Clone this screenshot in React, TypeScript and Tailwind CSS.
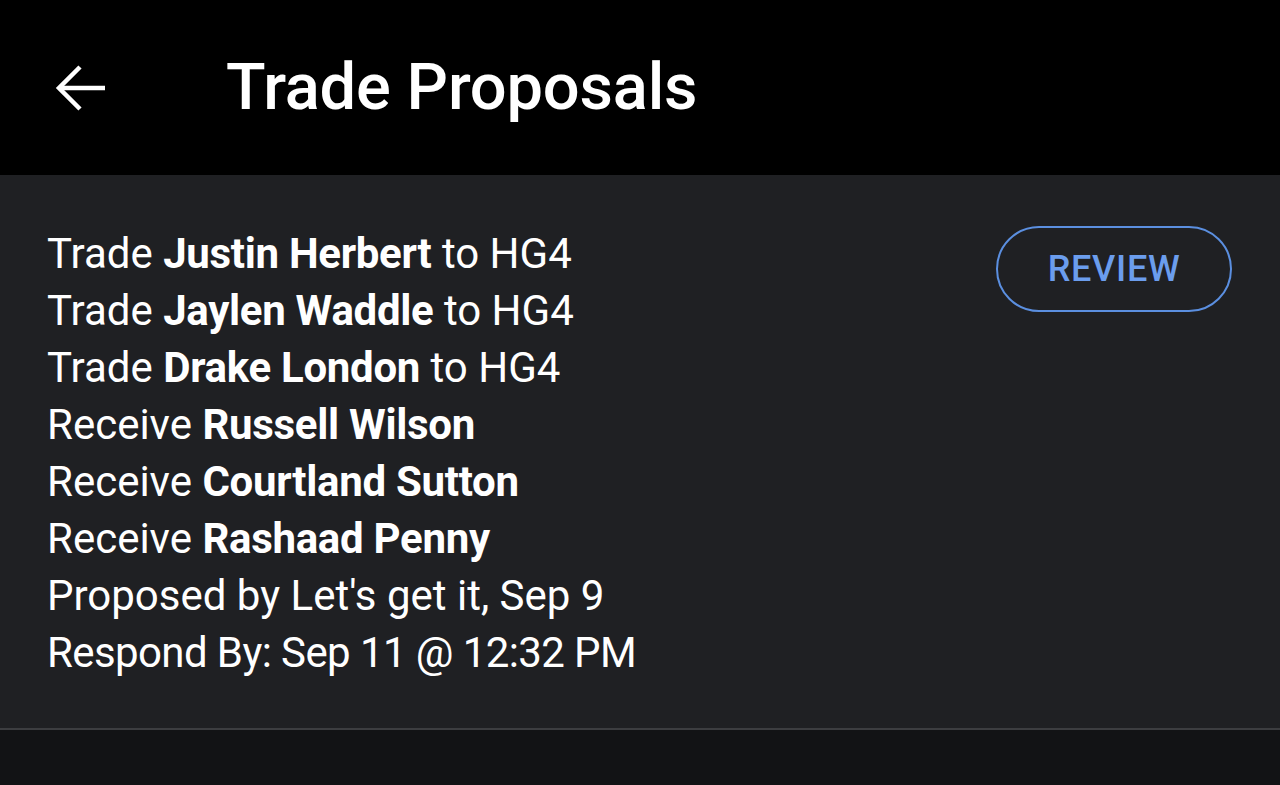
import React from 'react';

interface TradeLine {
  verb: string;
  player: string;
  suffix?: string;
}

const lines: TradeLine[] = [
  { verb: 'Trade', player: 'Justin Herbert', suffix: 'to HG4' },
  { verb: 'Trade', player: 'Jaylen Waddle', suffix: 'to HG4' },
  { verb: 'Trade', player: 'Drake London', suffix: 'to HG4' },
  { verb: 'Receive', player: 'Russell Wilson' },
  { verb: 'Receive', player: 'Courtland Sutton' },
  { verb: 'Receive', player: 'Rashaad Penny' },
];

export default function App() {
  return (
    <div
      className="w-[1280px] h-[785px] flex flex-col bg-[#121315] text-white overflow-hidden"
      style={{ fontFamily: 'Roboto, "Noto Sans", sans-serif' }}
    >
      {/* Header */}
      <div className="h-[175px] shrink-0 bg-black flex items-center">
        <button className="ml-[55px] w-[54px] h-[54px] flex items-center justify-center">
          <svg width="54" height="54" viewBox="0 0 54 54" fill="none">
            <path d="M50 27H5" stroke="white" strokeWidth="4.5" />
            <path d="M25 6L4 27L25 48" stroke="white" strokeWidth="4.5" />
          </svg>
        </button>
        <h1 className="ml-[117px] text-[65px] font-medium leading-none tracking-[-0.2px]">Trade Proposals</h1>
      </div>

      {/* Proposal card */}
      <div className="h-[555px] shrink-0 bg-[#1f2023] border-b-2 border-[#3c3d40] flex justify-between pl-[47px] pr-[48px] pt-[50px]">
        <div className="text-[42px] leading-[57px]">
          {lines.map((l, i) => (
            <div key={i}>
              {l.verb} <span className="font-bold tracking-[-0.3px]">{l.player}</span>
              {l.suffix ? ` ${l.suffix}` : ''}
            </div>
          ))}
          <div>Proposed by Let's get it, Sep 9</div>
          <div className="tracking-[-0.6px]">Respond By: Sep 11 @ 12:32 PM</div>
        </div>
        <div className="pt-[1px]">
          <button className="w-[236px] h-[86px] rounded-full border-2 border-[#5b8fe0] text-[#6b9ded] text-[36px] font-medium tracking-[0.7px]">
            REVIEW
          </button>
        </div>
      </div>
    </div>
  );
}
